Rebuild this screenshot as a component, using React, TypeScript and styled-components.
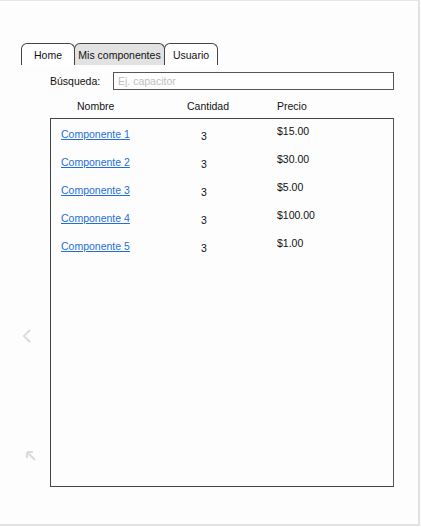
import styled, { createGlobalStyle } from "styled-components";

const GlobalStyle = createGlobalStyle`
  html, body {
    margin: 0;
    padding: 0;
    background: #ffffff;
  }
  body {
    font-family: "Liberation Sans", Arial, sans-serif;
    font-size: 10.5px;
    color: #111;
  }
`;

const COMPONENTS = [
  { id: 1, name: "Componente 1", qty: 3, price: "$15.00" },
  { id: 2, name: "Componente 2", qty: 3, price: "$30.00" },
  { id: 3, name: "Componente 3", qty: 3, price: "$5.00" },
  { id: 4, name: "Componente 4", qty: 3, price: "$100.00" },
  { id: 5, name: "Componente 5", qty: 3, price: "$1.00" },
];

const TABS = ["Home", "Mis componentes", "Usuario"];

const Frame = styled.div`
  position: relative;
  box-sizing: border-box;
  width: 420px;
  height: 526px;
  background: #fdfdfd;
  border-top: 1px solid #e6e6e6;
  border-right: 2px solid #e2e2e2;
  border-bottom: 2px solid #e2e2e2;
  padding: 42px 0 0 21px;
`;

const TabBar = styled.div`
  display: flex;
  height: 22px;
`;

const Tab = styled.div<{ $active?: boolean; $width: number }>`
  box-sizing: border-box;
  width: ${(p) => p.$width}px;
  margin-right: -1px;
  display: flex;
  align-items: center;
  justify-content: center;
  border: 1px solid #444;
  border-bottom: none;
  border-radius: 6px 6px 0 0;
  background: ${(p) => (p.$active ? "#e2e2e2" : "#fff")};
  font-size: 10.5px;
  color: #111;
  padding-top: 1px;
  white-space: nowrap;
`;

const SearchRow = styled.div`
  display: flex;
  align-items: center;
  margin-top: 7px;
  padding-left: 29px;
  height: 18px;
`;

const SearchLabel = styled.label`
  width: 63px;
  font-size: 10.5px;
`;

const SearchInput = styled.input`
  box-sizing: border-box;
  width: 281px;
  height: 18px;
  border: 1px solid #555;
  padding: 0 4px;
  margin: 0;
  font-family: "Liberation Sans", Arial, sans-serif;
  font-size: 10.5px;
  background: #fff;
  outline: none;

  &::placeholder {
    color: #bdbdbd;
  }
`;

const HeaderRow = styled.div`
  display: grid;
  grid-template-columns: 110px 90px 100px;
  margin-top: 10px;
  padding-left: 56px;
  height: 12px;
  line-height: 12px;
  font-size: 10.5px;
`;

const Table = styled.div`
  box-sizing: border-box;
  width: 344px;
  height: 369px;
  margin: 6px 0 0 29px;
  border: 1px solid #444;
  border-right-color: #555;
  padding: 8px 0 0 10px;
`;

const Row = styled.div`
  display: grid;
  grid-template-columns: 140px 76px 1fr;
  height: 28px;
  line-height: 14px;
`;

const NameLink = styled.a`
  color: #1f6fd8;
  text-decoration: underline;
  font-size: 10.5px;
  cursor: pointer;
`;

const Qty = styled.span`
  padding-top: 2px;
  font-size: 10.5px;
`;

const Price = styled.span`
  margin-top: -3px;
  font-size: 10.5px;
`;

const SideIcon = styled.div<{ $top: number; $left: number }>`
  position: absolute;
  top: ${(p) => p.$top}px;
  left: ${(p) => p.$left}px;
  line-height: 0;
`;

export default function App() {
  return (
    <>
      <GlobalStyle />
      <Frame>
        <TabBar>
          {TABS.map((t, i) => (
            <Tab key={t} $active={i === 1} $width={i === 1 ? 91 : 54}>
              {t}
            </Tab>
          ))}
        </TabBar>
        <SearchRow>
          <SearchLabel>Búsqueda:</SearchLabel>
          <SearchInput placeholder="Ej. capacitor" />
        </SearchRow>
        <HeaderRow>
          <span>Nombre</span>
          <span>Cantidad</span>
          <span>Precio</span>
        </HeaderRow>
        <Table>
          {COMPONENTS.map((c) => (
            <Row key={c.id}>
              <span>
                <NameLink>{c.name}</NameLink>
              </span>
              <Qty>{c.qty}</Qty>
              <Price>{c.price}</Price>
            </Row>
          ))}
        </Table>
        <SideIcon $top={327} $left={21}>
          <svg width="12" height="16" viewBox="0 0 12 16">
            <path d="M9 2 L3 8 L9 14" fill="none" stroke="#dcdcdc" strokeWidth="2.2" />
          </svg>
        </SideIcon>
        <SideIcon $top={449} $left={25}>
          <svg width="12" height="12" viewBox="0 0 12 12">
            <path d="M2 2 L10 10 M2 2 L2 8 M2 2 L8 2" fill="none" stroke="#dcdcdc" strokeWidth="2.2" />
          </svg>
        </SideIcon>
      </Frame>
    </>
  );
}
